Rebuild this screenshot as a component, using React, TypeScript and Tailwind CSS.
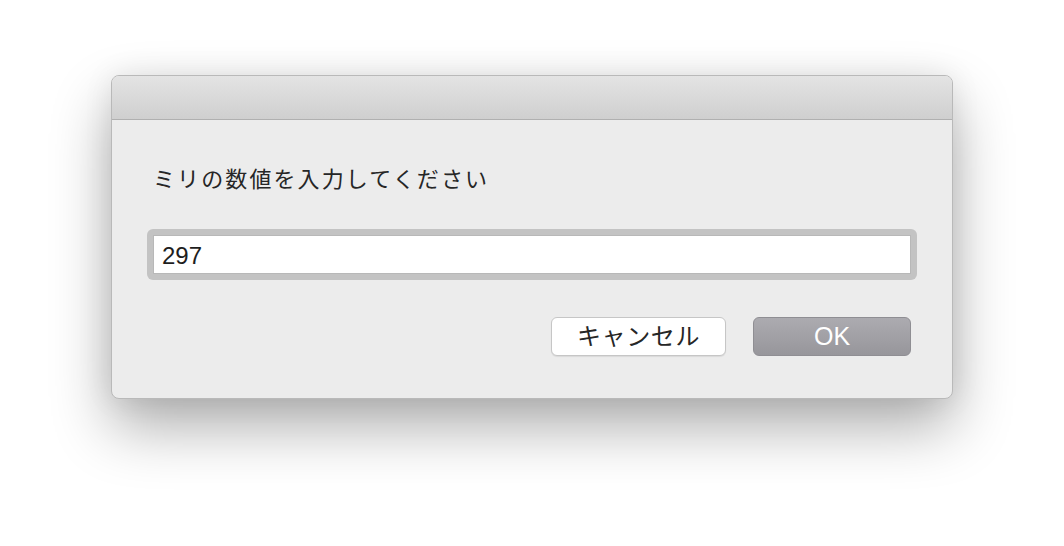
export default function App() {
  const font = { fontFamily: '"Liberation Sans", "Noto Sans CJK JP", sans-serif' };

  return (
    <div className="w-full h-[546px] bg-white pt-[75px] pl-[111px]" style={font}>
      <div className="w-[842px] h-[324px] flex flex-col rounded-[8px] border border-[#b9b9b9] bg-[#ececec] overflow-hidden shadow-[0_28px_60px_rgba(0,0,0,0.32),0_0_30px_rgba(0,0,0,0.08)]">
        <div className="h-[44px] shrink-0 bg-gradient-to-b from-[#e4e4e4] to-[#cfcfcf] border-b border-[#b0b0b0]"></div>

        <div className="flex-1 flex flex-col pl-[35px] pr-[35px]">
          <p className="mt-[45px] ml-[6px] text-[22px] leading-[30px] tracking-[2.1px] text-[#262626]">
            ミリの数値を入力してください
          </p>

          <div className="mt-[34px] h-[51px] rounded-[6px] bg-[#c3c3c3] p-[6px]">
            <div className="h-full bg-white border border-[#b8b8b8] flex items-center pl-[8px] pt-[3px]">
              <span className="text-[24px] text-[#1e1e1e] leading-none">297</span>
            </div>
          </div>

          <div className="mt-[37px] flex justify-end gap-[27px] pr-[6px]">
            <button className="w-[175px] h-[39px] rounded-[6px] bg-white border border-[#c6c6c6] shadow-[0_1px_1px_rgba(0,0,0,0.08)] text-[24px] leading-none text-[#262626] tracking-[0.6px]">
              キャンセル
            </button>
            <button className="w-[158px] h-[39px] rounded-[6px] bg-gradient-to-b from-[#acabb0] to-[#97969b] border border-[#8f8e93] text-[25px] leading-none text-white">
              OK
            </button>
          </div>
        </div>
      </div>
    </div>
  );
}
